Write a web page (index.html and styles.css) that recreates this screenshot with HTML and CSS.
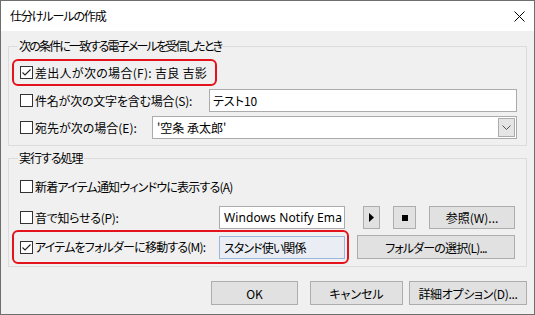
FILE: index.html
```html
<!DOCTYPE html>
<html lang="ja">
<head>
<meta charset="utf-8">
<title>仕分けルールの作成</title>
<link rel="stylesheet" href="styles.css">
</head>
<body>
<div class="window">
  <div class="titlebar">
    <span class="title">仕分けルールの作成</span>
    <svg class="close" width="11" height="11" viewBox="0 0 11 11"><path d="M0.5 0.5 L10.5 10.5 M10.5 0.5 L0.5 10.5" stroke="#000" stroke-width="1" fill="none"/></svg>
  </div>
  <div class="body">
    <fieldset class="group g1">
      <legend class="lg1">次の条件に一致する電子メールを受信したとき</legend>
      <div class="row hl hl1">
        <span class="cb"><svg width="11" height="11" viewBox="0 0 11 11"><path d="M1.5 5.5 L4 8 L9.5 2.5" stroke="#222" stroke-width="1.1" fill="none"/></svg></span>
        <span class="lbl t-from">差出人が次の場合(F): 吉良 吉影</span>
      </div>
      <div class="row r2">
        <span class="cb"></span>
        <span class="lbl w-subject">件名が次の文字を含む場合(S):</span>
        <div class="field grow">テスト10</div>
      </div>
      <div class="row r3">
        <span class="cb"></span>
        <span class="lbl w-to">宛先が次の場合(E):</span>
        <div class="field combo grow">
          <span class="combo-text">'空条 承太郎'</span>
          <span class="drop"><svg width="9" height="5" viewBox="0 0 9 5"><path d="M0.5 0.5 L4.5 4.5 L8.5 0.5" stroke="#555" stroke-width="1" fill="none"/></svg></span>
        </div>
      </div>
    </fieldset>

    <fieldset class="group g2">
      <legend class="lg2">実行する処理</legend>
      <div class="row r4">
        <span class="cb"></span>
        <span class="lbl t-notify">新着アイテム通知ウィンドウに表示する(A)</span>
      </div>
      <div class="row r5">
        <span class="cb"></span>
        <span class="lbl w-act t-sound">音で知らせる(P):</span>
        <div class="field sound">Windows Notify Ema</div>
        <button class="btn play"><svg width="5" height="9" viewBox="0 0 5 9"><path d="M0 0 L5 4.5 L0 9 Z" fill="#000"/></svg></button>
        <button class="btn stop"><svg width="6" height="6" viewBox="0 0 6 6"><rect width="6" height="6" fill="#000"/></svg></button>
        <button class="btn browse">参照(W)...</button>
      </div>
      <div class="row r6">
        <div class="row hl hl2">
          <span class="cb"><svg width="11" height="11" viewBox="0 0 11 11"><path d="M1.5 5.5 L4 8 L9.5 2.5" stroke="#222" stroke-width="1.1" fill="none"/></svg></span>
          <span class="lbl w-act t-move">アイテムをフォルダーに移動する(M):</span>
          <div class="field folder">スタンド使い関係</div>
        </div>
        <button class="btn pick">フォルダーの選択(L)...</button>
      </div>
    </fieldset>

    <div class="buttons">
      <button class="btn ok">OK</button>
      <button class="btn cancel">キャンセル</button>
      <button class="btn adv">詳細オプション(D)...</button>
    </div>
  </div>
</div>
</body>
</html>
```

FILE: styles.css
```css
* { box-sizing: border-box; }

body {
  margin: 0;
  font-family: "Noto Sans CJK JP", "Noto Sans", sans-serif;
  font-size: 12px;
  color: #000;
  font-feature-settings: "palt";
  background: #f0f0f0;
}

.window {
  width: 535px;
  height: 315px;
  border: 1px solid #6e6e6e;
  background: #f0f0f0;
  display: flex;
  flex-direction: column;
  overflow: hidden;
}

.titlebar {
  height: 30px;
  background: #fff;
  display: flex;
  align-items: center;
  justify-content: space-between;
  padding: 0 9px 0 9px;
  flex: none;
}

.title { line-height: 16px; letter-spacing: -1.1px; }
.close { display: block; }

.body {
  padding: 7px 7px 0 7px;
  display: flex;
  flex-direction: column;
}

.group {
  margin: 0;
  border: 1px solid #dcdcdc;
  padding: 5px 9px 6px 3px;
  min-width: 0;
}

.group legend {
  margin-left: 6px;
  padding: 0 1px;
  line-height: 16px;
}
.lg1 { letter-spacing: -1.8px; }
.lg2 { letter-spacing: -1px; }

.g2 {
  margin-top: 4px;
  padding-top: 9px;
  padding-bottom: 2px;
}

.row {
  display: flex;
  align-items: center;
  height: 23px;
  padding-left: 8px;
}

.hl {
  border: 2px solid #e3121b;
  border-radius: 6px;
  padding-left: 6px;
}

.hl1 { width: 205px; height: 27px; }

.r2 { margin-top: 3px; }
.r3 { margin-top: 4px; }

.r5 { margin-top: 8px; }
.r6 { margin-top: 1px; height: 34px; padding-left: 0; }
.hl2 { width: 337px; height: 34px; }

.cb {
  width: 13px;
  height: 13px;
  border: 1px solid #333;
  background: #fff;
  flex: none;
  margin-right: 2px;
  display: flex;
  align-items: center;
  justify-content: center;
}
.cb svg { display: block; }

.lbl { white-space: nowrap; flex: none; line-height: 16px; overflow: hidden; }
.w-subject { width: 174px; letter-spacing: -0.2px; }
.w-to { width: 117px; }
.w-act { width: 184px; }
.t-from { letter-spacing: 0.3px; }
.t-notify { letter-spacing: -0.8px; }
.t-sound { letter-spacing: -0.3px; }
.t-move { letter-spacing: -0.8px; }

.field {
  height: 23px;
  border: 1px solid #ababab;
  background: #fff;
  padding-left: 3px;
  display: flex;
  align-items: center;
  white-space: nowrap;
  overflow: hidden;
}
.grow { flex: 1; }

.combo { padding-left: 4px; justify-content: space-between; }
.drop {
  width: 17px;
  height: 19px;
  margin-right: 1px;
  background: #e5e5e5;
  border: 1px solid #acacac;
  display: flex;
  align-items: center;
  justify-content: center;
  flex: none;
}
.drop svg { display: block; }

.sound {
  width: 126px;
  flex: none;
  padding-left: 4px;
  font-family: "Noto Sans", "Noto Sans CJK JP", sans-serif;
  letter-spacing: 0.1px;
}
.folder {
  width: 126px;
  flex: none;
  padding-left: 4px;
  background: #eaeef4;
  border-color: #9ab6dc;
  letter-spacing: -0.9px;
}

.btn {
  font: inherit;
  font-feature-settings: "palt";
  color: #000;
  background: #e1e1e1;
  border: 1px solid #adadad;
  height: 23px;
  padding: 0;
  margin: 0;
  display: flex;
  align-items: center;
  justify-content: center;
  flex: none;
}
.btn svg { display: block; }

.play { width: 17px; margin-left: 18px; }
.stop { width: 23px; margin-left: 13px; }
.browse { width: 86px; margin-left: 13px; }
.pick { width: 158px; height: 24px; margin-left: 8px; letter-spacing: -0.85px; }

.buttons {
  display: flex;
  justify-content: flex-end;
  margin-top: 14px;
}
.buttons .btn { height: 24px; }
.ok { width: 87px; margin-right: 12px; }
.cancel { width: 93px; margin-right: 6px; }
.adv { width: 118px; letter-spacing: -0.3px; }
```
